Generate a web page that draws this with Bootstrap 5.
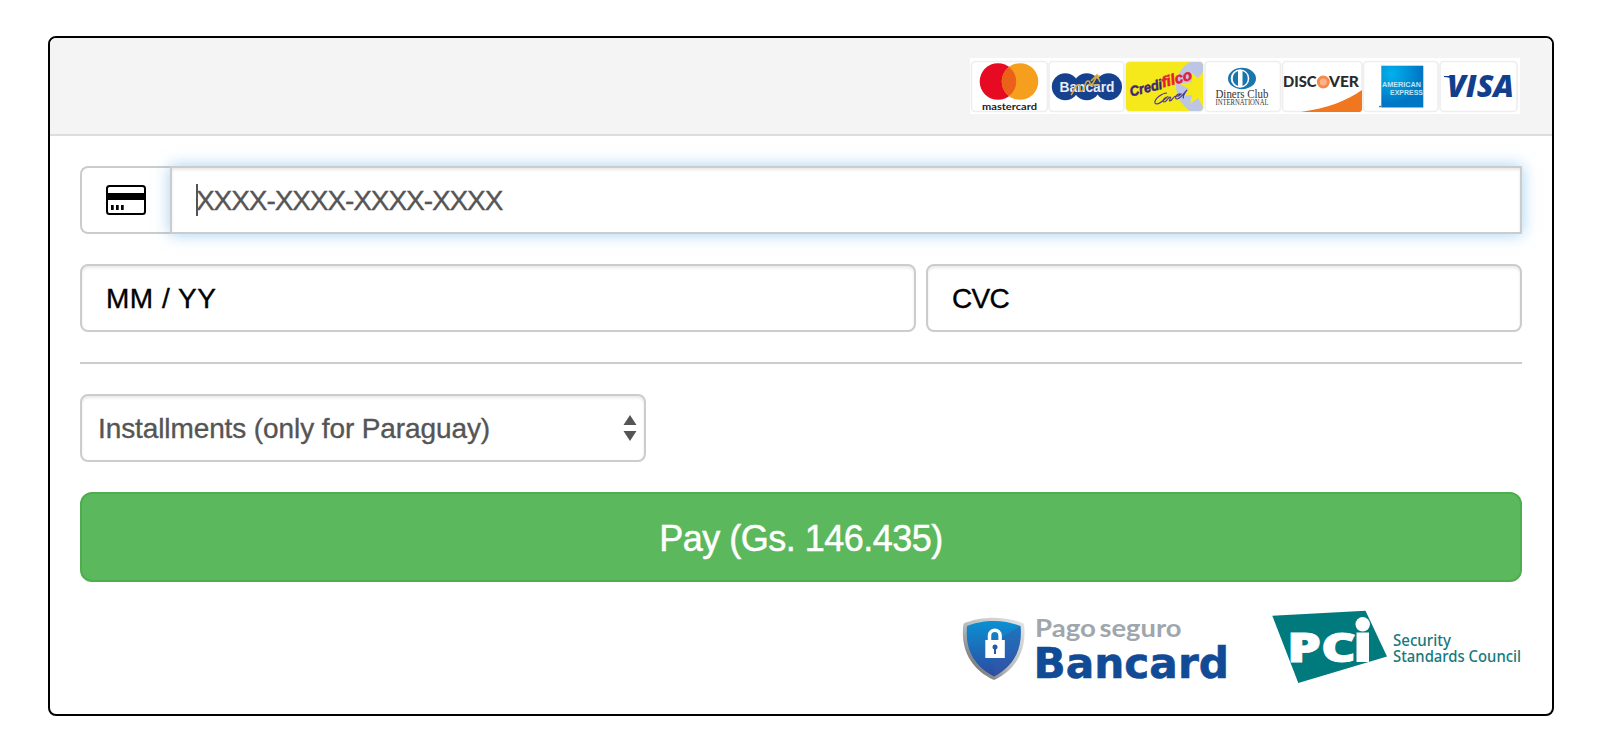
<!DOCTYPE html>
<html lang="en">
<head>
<meta charset="utf-8">
<meta name="viewport" content="width=device-width, initial-scale=1">
<title>Payment</title>
<link href="https://cdn.jsdelivr.net/npm/bootstrap@5.3.0/dist/css/bootstrap.min.css" rel="stylesheet">
<style>
  body { background: #fff; font-family: "Liberation Sans", Arial, sans-serif; overflow: hidden; }
  .pay-card { width: 1506px; height: 680px; margin: 36px 0 0 48px; border: 2px solid #000; border-radius: 8px; overflow: hidden; }
  .pay-head { height: 98px; background: #f4f4f4; border-bottom: 2px solid #ddd; padding: 20px 32px 0 0; border-radius: 0; }
  .pay-body { padding: 30px 30px 0; }
  .pay-field { height: 68px; border: 2px solid #ccc; border-radius: 8px; font-size: 28px; line-height: 32px; padding: 17px 24px 15px; color: #000; box-shadow: inset 0 2px 3px rgba(0,0,0,.09); -webkit-text-stroke: .35px; }
  .pay-field::placeholder { color: #000; opacity: 1; }
  .pay-field:focus { box-shadow: inset 0 2px 3px rgba(0,0,0,.09); border-color: #ccc; }
  .pay-icon { width: 91px; height: 68px; background: #fff; border: 2px solid #ccc; border-right: 0; border-radius: 8px 0 0 8px; padding: 0 0 0 24px; }
  .pay-number { border-radius: 0; letter-spacing: -1.08px; box-shadow: inset 0 2px 3px rgba(0,0,0,.09), 0 0 15px rgba(102,175,233,.6); }
  .pay-number::placeholder { color: #555; }
  .pay-caret { left: 26px; top: 18px; width: 2px; height: 32px; background: #555; z-index: 6; }
  .pay-expiry { width: 836px; letter-spacing: .5px; }
  .pay-cvc { width: 596px; letter-spacing: -.7px; }
  .pay-rule { height: 2px; background: #ccc; margin: 30px 0; }
  .pay-plan { width: 566px; }
  .pay-plan .pay-field { color: #555; padding: 15px 16px 13px; line-height: 36px; background: #fff; letter-spacing: -.1px; }
  .pay-arrows { right: 9px; top: 21px; }
  .pay-btn { height: 90px; margin-top: 30px; padding: 8px 12px 4px; background: #5cb85c; border: 2px solid #4cae4c; border-radius: 12px; color: #fff; font-size: 36px; line-height: 48px; letter-spacing: -.5px; -webkit-text-stroke: .5px; }
  .pay-logos { gap: 10px; margin-top: 13px; }
</style>
</head>
<body>
<main class="card pay-card">
  <header class="card-header pay-head d-flex justify-content-end align-items-start">
    <svg width="550" height="56" viewBox="0 0 550 56" role="img" aria-label="Accepted cards">
      <defs>
        <radialGradient id="amexBlue" cx=".25" cy=".2" r=".7"><stop offset="0" stop-color="#00b2ec"/><stop offset="1" stop-color="#0077c5"/></radialGradient>
        <clipPath id="filcoTile"><rect x="156" y="4" width="77" height="49" rx="4"/></clipPath>
      </defs>
      <rect width="550" height="56" fill="#fff"/>
      <g fill="#fff" stroke="#eee" stroke-width="1.6">
        <rect x="1.5" y="3.5" width="76" height="50" rx="4"/><rect x="79" y="3.5" width="75" height="50" rx="4"/>
        <rect x="156" y="3.5" width="77" height="50" rx="4"/><rect x="235" y="3.5" width="75.500" height="50" rx="4"/>
        <rect x="312.500" y="3.500" width="79.500" height="50" rx="4"/><rect x="393.500" y="3.500" width="74.500" height="50" rx="4"/>
        <rect x="470" y="3.500" width="77" height="50" rx="4"/>
      </g>
      <!-- mastercard -->
      <circle cx="28" cy="23.500" r="18.300" fill="#e60a22"/><circle cx="50" cy="23.500" r="18.300" fill="#f69f1e"/>
      <path d="M39 8.900a18.300 18.300 0 0 1 0 29.200a18.300 18.300 0 0 1 0-29.200z" fill="#ec611a"/>
      <text x="12" y="51.500" font-size="10" font-family="Lato" font-weight="700" textLength="55" lengthAdjust="spacingAndGlyphs" fill="#222">mastercard</text>
      <!-- Bancard -->
      <g fill="#15418f"><circle cx="95.300" cy="28.700" r="13.500"/><circle cx="116.700" cy="28.700" r="13.500"/><circle cx="138.500" cy="28.700" r="13.500"/></g>
      <text x="89.500" y="33.500" font-size="14" font-family="Liberation Sans" font-weight="700" textLength="55" lengthAdjust="spacingAndGlyphs" fill="#e9edf6">Bancard</text>
      <path d="M101 37c3-3 3-9 7-10s0 8 4 6 2-10 6-10 0 6 4 3 2-8 8-8M121 23l6-6 3 7M118 27h12" fill="none" stroke="#d6a83c" stroke-width="1.600"/>
      <!-- Credifilco -->
      <g clip-path="url(#filcoTile)">
        <rect x="156" y="4" width="77" height="49" fill="#f5e91b"/>
        <path d="M233 4h-13c-7 4-14 12-14 24s7 20 14 25h13z" fill="#bdc5e4"/>
        <path d="M233 14l-5 6-7-6 1 10-12 2 9 5-5 7 8-1-2 9 8-6 5 9z" fill="#f5e91b"/>
        <g font-family="Liberation Sans" font-weight="700" font-style="italic">
          <text transform="translate(161 38.500) rotate(-14)" font-size="14" textLength="33" lengthAdjust="spacingAndGlyphs" fill="#3b2675" stroke="#3b2675" stroke-width=".5">Credi</text>
          <text transform="translate(193 29.500) rotate(-15)" font-size="15" textLength="31" lengthAdjust="spacingAndGlyphs" fill="#e3203a" stroke="#e3203a" stroke-width=".6">filco</text>
        </g>
        <path d="M197 35c-5 0-13 6-12 10 2 3 8-2 12-6-4 1-5 5-3 5 3 0 4-5 6-5s-2 4 0 4c3-1 3-5 6-5s2 1 5-2c-5-1-7 5-4 5 4-1 7-6 10-9-3 4-5 8-3 8" fill="none" stroke="#4c3d91" stroke-width="1.200"/>
      </g>
      <!-- Diners Club -->
      <ellipse cx="272" cy="20.500" rx="14" ry="10.700" fill="#1b75ad"/><circle cx="270" cy="20.500" r="9.300" fill="#fff"/>
      <path d="M268 13a8 8 0 0 0 0 15zM272.500 13a8 8 0 0 1 0 15z" fill="#1b75ad"/>
      <g font-family="Liberation Serif" fill="#333">
        <text x="245.500" y="40.300" font-size="12" textLength="53" lengthAdjust="spacingAndGlyphs">Diners Club</text>
        <text x="245.500" y="47.300" font-size="7.500" textLength="53" lengthAdjust="spacingAndGlyphs">INTERNATIONAL</text>
      </g>
      <!-- Discover -->
      <g font-family="Lato" font-weight="900" font-size="15" fill="#2b2a2c">
        <text x="313" y="29.400" textLength="33.500" lengthAdjust="spacingAndGlyphs">DISC</text>
        <text x="359" y="29.400" textLength="30" lengthAdjust="spacingAndGlyphs">VER</text>
      </g>
      <circle cx="353.300" cy="24" r="5" fill="#fbb48a" stroke="#f58a4c" stroke-width="3"/>
      <path d="M331 54c27-4 45-11 61-22v19q0 3-3 3z" fill="#f0761f"/>
      <!-- American Express -->
      <rect x="411.300" y="7.700" width="42" height="41.800" fill="url(#amexBlue)"/>
      <g font-family="Liberation Sans" font-weight="700" fill="#bfe5f8">
        <text x="412" y="29" font-size="8" textLength="39" lengthAdjust="spacingAndGlyphs">AMERICAN</text>
        <text x="420" y="37" font-size="7.500" textLength="33" lengthAdjust="spacingAndGlyphs">EXPRESS</text>
      </g>
      <path d="M409 48.500h2.300" stroke="#777" stroke-width="1.500"/>
      <!-- Visa -->
      <text x="477" y="39" font-size="29.500" font-family="Open Sans" font-weight="800" font-style="italic" textLength="67" lengthAdjust="spacingAndGlyphs" fill="#123f8d">VISA</text>
      <path d="M474 18h9v3c-2-1-5-2-9-2z" fill="#123f8d"/>
    </svg>
  </header>
  <form class="card-body pay-body">
    <div class="input-group flex-nowrap">
      <span class="input-group-text pay-icon">
        <svg width="40" height="30" viewBox="0 0 40 30" aria-hidden="true">
          <rect x="1" y="1" width="38" height="28" rx="2.500" fill="#fff" stroke="#000" stroke-width="2"/>
          <path d="M0 8h40v7H0zM5 20h2.700v5H5zM10 20h2.700v5H10zM15 20h2.700v5H15z"/>
        </svg>
      </span>
      <div class="position-relative flex-grow-1">
        <input class="form-control pay-field pay-number" type="text" placeholder="XXXX-XXXX-XXXX-XXXX" aria-label="Card number">
        <span class="pay-caret position-absolute"></span>
      </div>
    </div>
    <div class="d-flex justify-content-between" style="margin-top:30px">
      <input class="form-control pay-field pay-expiry" type="text" placeholder="MM / YY" aria-label="Expiry">
      <input class="form-control pay-field pay-cvc" type="text" placeholder="CVC" aria-label="Security code">
    </div>
    <div class="pay-rule"></div>
    <div class="position-relative pay-plan">
      <select class="form-control pay-field" aria-label="Installments"><option>Installments (only for Paraguay)</option></select>
      <svg class="pay-arrows position-absolute pe-none" width="14" height="26" viewBox="0 0 14 26" aria-hidden="true"><path d="M7 0l6.500 10H.5zM7 26l6.500-10H.5z" fill="#555"/></svg>
    </div>
    <button class="btn w-100 pay-btn d-block" type="button">Pay (Gs. 146.435)</button>
    <div class="d-flex justify-content-end pay-logos">
      <svg width="300" height="100" viewBox="0 0 300 100" role="img" aria-label="Pago seguro Bancard">
        <defs>
          <linearGradient id="shieldBlue" x1="0" y1="0" x2="0" y2="1"><stop offset="0" stop-color="#0b90d2"/><stop offset="1" stop-color="#2e4aa0"/></linearGradient>
          <linearGradient id="shieldRim" x1="0" y1="1" x2="1" y2="0"><stop offset="0" stop-color="#4d4d4d"/><stop offset=".45" stop-color="#b9b9b9"/><stop offset="1" stop-color="#e8e8e8"/></linearGradient>
        </defs>
        <path d="M54 22.700c10 0 22 2 30 6 3 24-6 45-30 56.300C30 74 20 53 23.500 28.700c8-4 20-6 30.500-6z" fill="url(#shieldRim)"/>
        <path d="M54 26c9 0 19 2 26.500 5 2 21-5 39-26.500 50.500C32 70 25 52 27 31c7-3 17-5 27-5z" fill="url(#shieldBlue)"/>
        <path d="M54 81.500C75.500 70 82.500 52 80.500 31L54 48z" fill="#3558ae" opacity=".45"/>
        <path d="M49.500 46v-5.500a5.300 5.300 0 0 1 10.600 0V46" fill="none" stroke="#fff" stroke-width="3.500"/>
        <rect x="45.300" y="45" width="19.500" height="18" fill="#fff"/><circle cx="55" cy="52" r="2.500" fill="#235aa9"/><path d="M54 52h2v7h-2z" fill="#235aa9"/>
        <g font-family="Lato" font-weight="700" font-size="24.500" fill="#9fa6ad">
          <text x="95" y="42" textLength="61" lengthAdjust="spacingAndGlyphs">Pago</text>
          <text x="159.500" y="42" textLength="82" lengthAdjust="spacingAndGlyphs">seguro</text>
        </g>
        <text x="93.500" y="83" font-family="DejaVu Sans" font-weight="700" font-size="42.500" textLength="195.500" lengthAdjust="spacingAndGlyphs" fill="#114b96" stroke="#114b96" stroke-width=".6">Bancard</text>
      </svg>
      <svg width="272" height="100" viewBox="0 0 272 100" role="img" aria-label="PCI Security Standards Council">
        <path d="M22.300 20.700L115.500 15.700 137 61.500 48.300 88z" fill="#007a7c"/>
        <text x="37" y="66.700" font-family="Open Sans" font-weight="800" font-size="40" textLength="69" lengthAdjust="spacingAndGlyphs" fill="#fff" stroke="#fff" stroke-width=".8">PC</text>
        <path d="M106.500 37.500H119V67h-12.500z" fill="#fff"/><circle cx="112.700" cy="29.300" r="7.200" fill="#fff"/>
        <g font-family="Noto Sans" font-size="15.500" font-weight="500" fill="#16797c">
          <text x="143" y="50.500" textLength="58" lengthAdjust="spacingAndGlyphs">Security</text>
          <text x="143" y="66.800" textLength="128" lengthAdjust="spacingAndGlyphs">Standards Council</text>
        </g>
      </svg>
    </div>
  </form>
</main>
<script src="https://cdn.jsdelivr.net/npm/bootstrap@5.3.0/dist/js/bootstrap.bundle.min.js"></script>
</body>
</html>
